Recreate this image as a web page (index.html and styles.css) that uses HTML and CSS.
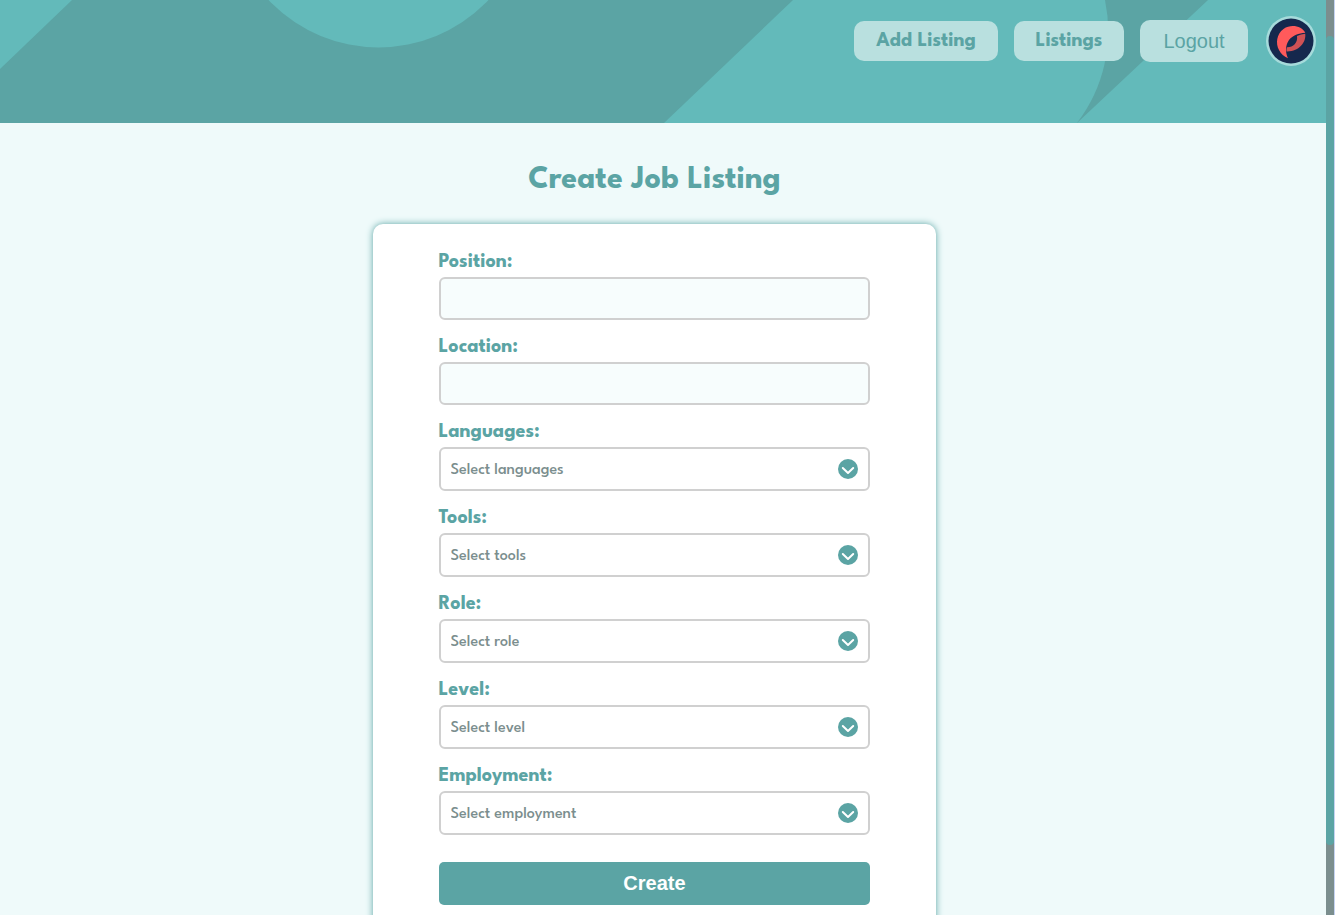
FILE: index.html
```html
<!DOCTYPE html>
<html lang="en">
<head>
  <meta charset="utf-8">
  <meta name="viewport" content="width=device-width, initial-scale=1">
  <title>Create Job Listing</title>
  <link rel="stylesheet" href="styles.css">
</head>
<body>
  <div class="page">
    <header class="header">
      <svg class="header-art" viewBox="0 0 1326 123" preserveAspectRatio="xMidYMid slice" aria-hidden="true">
        <path fill="#5ba4a4" d="M72 0H793L664 123H0V69Z"/>
        <circle fill="#63baba" cx="378.500" cy="-103.500" r="151"/>
        <path fill="#5ba4a4" d="M1105 0A151 151 0 0 1 1077 123L1208 0Z"/>
      </svg>
      <nav class="nav">
        <a class="nav-link nav-link-wide" href="#add">Add Listing</a>
        <a class="nav-link" href="#listings">Listings</a>
        <button class="logout" type="button">Logout</button>
        <a class="avatar" href="#profile" aria-label="Profile">
          <svg viewBox="0 0 50 50" aria-hidden="true">
            <circle cx="25" cy="25" r="25" fill="#a6dbdb"/>
            <circle cx="25" cy="25" r="22.500" fill="#15284d"/>
            <path fill="#cf5155" d="M31 20Q35 18.300 39.200 17.800C40.500 26 33 36 20.500 35.500Q20.200 33 21 31.300C27 31.500 32 27 31 20Z"/>
            <path fill="#ff5a5b" d="M39.300 16.700C36 10.500 25.500 7.500 17.500 13C10.500 18 9.500 27.500 13 34C15 37.800 18 40.500 22 42.300C19.500 37 19 29.500 23 24C27 19 32.500 17.500 39.300 16.700Z"/>
          </svg>
        </a>
      </nav>
    </header>
    <main class="main">
      <h1 class="title">Create Job Listing</h1>
      <form class="card">
        <div class="field">
          <label class="label" for="position">Position:</label>
          <input class="input" id="position" type="text">
        </div>
        <div class="field">
          <label class="label" for="location">Location:</label>
          <input class="input" id="location" type="text">
        </div>
        <div class="field">
          <label class="label" for="languages">Languages:</label>
          <div class="picker">
            <select class="select" id="languages"><option>Select languages</option></select>
            <svg class="chevron" viewBox="0 0 20 20" aria-hidden="true"><circle cx="10" cy="10" r="10"/><path d="M4.800 9l5.200 5 5.200-5"/></svg>
          </div>
        </div>
        <div class="field">
          <label class="label" for="tools">Tools:</label>
          <div class="picker">
            <select class="select" id="tools"><option>Select tools</option></select>
            <svg class="chevron" viewBox="0 0 20 20" aria-hidden="true"><circle cx="10" cy="10" r="10"/><path d="M4.800 9l5.200 5 5.200-5"/></svg>
          </div>
        </div>
        <div class="field">
          <label class="label" for="role">Role:</label>
          <div class="picker">
            <select class="select" id="role"><option>Select role</option></select>
            <svg class="chevron" viewBox="0 0 20 20" aria-hidden="true"><circle cx="10" cy="10" r="10"/><path d="M4.800 9l5.200 5 5.200-5"/></svg>
          </div>
        </div>
        <div class="field">
          <label class="label" for="level">Level:</label>
          <div class="picker">
            <select class="select" id="level"><option>Select level</option></select>
            <svg class="chevron" viewBox="0 0 20 20" aria-hidden="true"><circle cx="10" cy="10" r="10"/><path d="M4.800 9l5.200 5 5.200-5"/></svg>
          </div>
        </div>
        <div class="field">
          <label class="label" for="employment">Employment:</label>
          <div class="picker">
            <select class="select" id="employment"><option>Select employment</option></select>
            <svg class="chevron" viewBox="0 0 20 20" aria-hidden="true"><circle cx="10" cy="10" r="10"/><path d="M4.800 9l5.200 5 5.200-5"/></svg>
          </div>
        </div>
        <button class="create" type="submit">Create</button>
      </form>
    </main>
  </div>
  <div class="rail" aria-hidden="true"><div class="thumb"></div></div>
</body>
</html>
```
FILE: styles.css
```css
* {
  box-sizing: border-box;
}

html {
  scrollbar-width: none;
}

body {
  margin: 0;
  display: flex;
  align-items: flex-start;
  min-height: 100vh;
  background: #effafa;
  color: #5ba4a4;
  font-family: "League Spartan", Lato, sans-serif;
}

.page {
  flex: 1;
  min-width: 0;
}

.header {
  position: relative;
  height: 123px;
  padding: 16px 10px;
  background: #63baba;
  overflow: hidden;
}

.header-art {
  position: absolute;
  inset: 0;
  width: 100%;
  height: 100%;
}

.nav {
  position: relative;
  display: flex;
  justify-content: flex-end;
  align-items: center;
  gap: 16px;
}

.nav-link,
.logout {
  display: flex;
  align-items: center;
  justify-content: center;
  min-width: 110px;
  height: 40px;
  border: 0;
  border-radius: 10px;
  background: #b9e0df;
  color: #5ba4a4;
  font-size: 20px;
  font-weight: 700;
  text-decoration: none;
}

.nav-link-wide {
  min-width: 144px;
}

.logout {
  min-width: 108px;
  height: 42px;
  font-family: "Liberation Sans", Arial, sans-serif;
  font-size: 20px;
  font-weight: 400;
}

.avatar,
.avatar svg {
  display: block;
  width: 50px;
  height: 50px;
}

.avatar {
  margin-left: 2px;
}

.main {
  display: flex;
  flex-direction: column;
  align-items: center;
  padding: 38px 17px 48px 0;
}

.title {
  margin: 0 0 23px;
  font-size: 32px;
  font-weight: 700;
  line-height: 40px;
}

.card {
  display: flex;
  flex-direction: column;
  gap: 16px;
  width: 43%;
  min-width: 320px;
  padding: 28px 5% 48px;
  border-radius: 10px;
  background: #fff;
  box-shadow: 0 0 7px #5ba4a4;
}

.field {
  display: flex;
  flex-direction: column;
  gap: 5px;
}

.label {
  font-size: 20px;
  font-weight: 700;
  line-height: 20px;
}

.field + .field {
  margin-top: 1px;
}

.input,
.select {
  width: 100%;
  height: 43px;
  padding: 0 10px;
  border: 2px solid #d0d0d0;
  border-radius: 6px;
  background: #f7fdfd;
  color: #7b8e8e;
  font-family: inherit;
  font-size: 16px;
}

.picker {
  position: relative;
  display: flex;
}

.select {
  height: 44px;
  padding-top: 2px;
  appearance: none;
  background: #fff;
  font-size: 16px;
  font-weight: 500;
}

.chevron {
  position: absolute;
  top: 12px;
  right: 12px;
  width: 20px;
  height: 20px;
  fill: #5ba4a4;
  pointer-events: none;
}

.chevron path {
  fill: none;
  stroke: #fff;
  stroke-width: 2;
  stroke-linecap: round;
  stroke-linejoin: round;
}

.create {
  height: 43px;
  margin-top: 11px;
  border: 0;
  border-radius: 5px;
  background: #5ba4a4;
  color: #fff;
  font-family: "Liberation Sans", Arial, sans-serif;
  font-size: 20px;
  font-weight: 700;
}

.rail {
  position: sticky;
  top: 0;
  width: 9px;
  height: 100vh;
  padding-top: 36px;
  border-right: 1px solid #c5d3f2;
  background: #7b8e8e;
}

.thumb {
  height: 92%;
  border-radius: 4px;
  background: #5ba4a4;
}
```
